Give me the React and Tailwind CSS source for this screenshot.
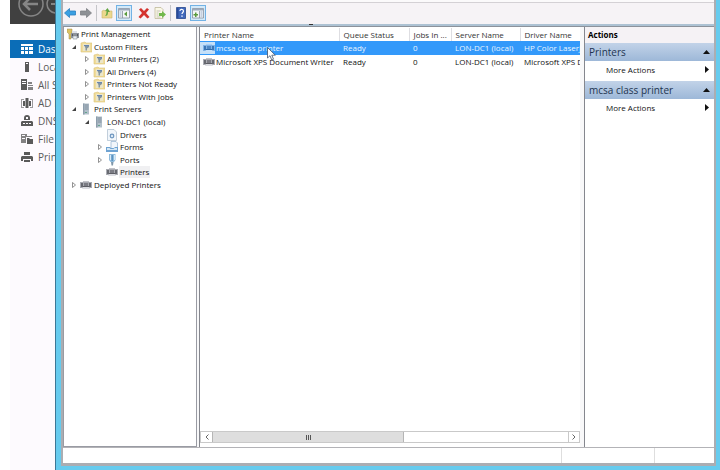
/** Print Management console window, with the server dashboard behind it. */

import { useState } from "react";

const roles = [
  { label: "Dashboard", icon: "grid", active: true },
  { label: "Local Server", icon: "server" },
  { label: "All Servers", icon: "servers" },
  { label: "AD DS", icon: "directory" },
  { label: "DNS", icon: "dns" },
  { label: "File Services", icon: "file" },
  { label: "Print Services", icon: "print" },
];

const tree = [
  { label: "Print Management", level: 0, icon: "console" },
  { label: "Custom Filters", level: 1, icon: "filter", state: "open" },
  { label: "All Printers (2)", level: 2, icon: "filter", state: "closed" },
  { label: "All Drivers (4)", level: 2, icon: "filter", state: "closed" },
  { label: "Printers Not Ready", level: 2, icon: "filter", state: "closed" },
  { label: "Printers With Jobs", level: 2, icon: "filter", state: "closed" },
  { label: "Print Servers", level: 1, icon: "tower", state: "open" },
  { label: "LON-DC1 (local)", level: 2, icon: "tower", state: "open" },
  { label: "Drivers", level: 3, icon: "driver" },
  { label: "Forms", level: 3, icon: "form", state: "closed" },
  { label: "Ports", level: 3, icon: "port", state: "closed" },
  { label: "Printers", level: 3, icon: "printer" },
  { label: "Deployed Printers", level: 1, icon: "printer", state: "closed" },
];

const indents = ["pl-[3px]", "pl-[3px]", "pl-4", "pl-[29px]"];

const printers = [
  { name: "mcsa class printer", status: "Ready", jobs: 0, server: "LON-DC1 (local)", driver: "HP Color LaserJet" },
  { name: "Microsoft XPS Document Writer", status: "Ready", jobs: 0, server: "LON-DC1 (local)", driver: "Microsoft XPS Document" },
];

const columns = [
  { label: "Printer Name", width: "w-[139px]" },
  { label: "Queue Status", width: "w-[70px]" },
  { label: "Jobs In ...", width: "w-[42px]" },
  { label: "Server Name", width: "w-[69px]" },
  { label: "Driver Name", width: "" },
];

function RoleIcon({ name }) {
  return (
    <svg viewBox="0 0 12 12" className="size-3 shrink-0" fill="currentColor" aria-hidden="true">
      {name === "grid" && (
        <path d="M0 1h12v2H0zM0 4h3v3H0zM4 4h3v3H4zM8 4h4v3H8zM0 8h3v3H0zM4 8h3v3H4zM8 8h4v3H8z" />
      )}
      {name === "server" && <path fillRule="evenodd" d="M4 1h4v10H4zM5 2v1h2V2z" />}
      {name === "servers" && (
        <>
          <path fillRule="evenodd" d="M0 0h6v11H0zM1 2v1h4V2zM1 4v1h4V4z" />
          <path d="M7 3h4v2H7zM7 6h5v1H7zM7 8h5v3H7z" opacity=".75" />
        </>
      )}
      {name === "directory" && (
        <>
          <path d="M0 2h3v1H1v7h2v1H0zM12 2H9v1h2v7H9v1h3z" opacity=".6" />
          <path d="M2 4h2v5H2zM8 4h2v5H8zM4.500 1h3v10h-3z" />
        </>
      )}
      {name === "dns" && (
        <>
          <path fillRule="evenodd" d="M6 0a3 3 0 0 1 3 3v2H3V3a3 3 0 0 1 3-3zM5 2v2h2V2z" />
          <path fillRule="evenodd" d="M1 6h10l1 1v4H0V7zM2 8v1h2V8zM5 8v1h2V8zM8 8v1h2V8z" />
        </>
      )}
      {name === "file" && (
        <>
          <path fillRule="evenodd" d="M0 1h6v2h5v1H5v6H0zM1 2v1h3V2zM1 5v1h3V5z" opacity=".75" />
          <path d="M6 5h2l1 1h3v5H6z" />
        </>
      )}
      {name === "print" && (
        <path fillRule="evenodd" d="M3 1h6v3H3zM1 5h10l1 1v4h-2V8H2v2H0V6zM3 9h6v2H3z" />
      )}
    </svg>
  );
}

function PrinterArt({ selected }) {
  const dark = selected ? "#2f6bab" : "#5d5e65";
  const light = selected ? "#7fb2e6" : "#a9abb2";
  return (
    <>
      <path d="M3 2h6v2H3z" fill={selected ? "#a9cff4" : "#c2c3c9"} />
      <path d="M0 3h12v6H0z" fill={light} />
      <path d="M1 4h2v4H1zM9 4h2v4H9z" fill={dark} opacity=".85" />
      <path d="M4 4h4v3H4z" fill={dark} opacity=".6" />
      <path d="M3 7h6v1H3z" fill={dark} />
      <path d="M3 8h6l1 2H2z" fill={selected ? "#c7e1fa" : "#dcdde2"} />
    </>
  );
}

function TreeIcon({ name, selected }) {
  return (
    <svg viewBox="0 0 12 12" className="size-3 shrink-0" aria-hidden="true">
      {name === "printer" && <PrinterArt selected={selected} />}
      {name === "console" && (
        <>
          <path d="M0 1h5v4l-1 1v5H2V6L0 4z" fill="#dcc263" stroke="#9c8748" strokeWidth=".5" />
          <path d="M5 3h5v2H5z" fill="#dfe2ea" />
          <path d="M4 5h8v5H4z" fill="#8f949c" />
          <path d="M5 6h1v2H5zM10 6h1v2h-1z" fill="#565a62" />
          <path d="M6 8h4v3H6z" fill="#e8edf2" stroke="#7a8088" strokeWidth=".5" />
        </>
      )}
      {name === "filter" && (
        <>
          <path d="M1 2l4-1 1 1h6v9H1z" fill="#f0dc9a" stroke="#dcc277" strokeWidth=".6" />
          <path d="M3 3h7v7H3z" fill="#ece6c8" />
          <path d="M4 4h5v2L7 7.500V9.500H5.500V7z" fill="#8294a0" />
          <path d="M4 4h5v1H4z" fill="#6886b0" />
        </>
      )}
      {name === "tower" && (
        <>
          <path d="M3 .5h6v11H3z" fill="#b3c0cb" />
          <path d="M3 .5h1.500v11H3z" fill="#8d9dab" />
          <path d="M5 2h3.500M5 4h3.500M5 6h3.500" stroke="#6f8291" strokeWidth=".8" />
          <path d="M5 9h2v1H5z" fill="#65a38d" />
        </>
      )}
      {name === "driver" && (
        <>
          <path d="M1.500.5h6.500l2.500 2.500v8.500h-9z" fill="#f1f6fb" stroke="#a9bacb" strokeWidth=".7" />
          <circle cx="6" cy="7" r="1.800" fill="#dbe8f5" stroke="#6d96bf" strokeWidth="1.200" />
        </>
      )}
      {name === "form" && (
        <>
          <path d="M5 .5h5l1.500 1.500v6H5z" fill="#f1f6fb" stroke="#8fb0d0" strokeWidth=".7" />
          <path d="M0 6h4l1 1h3l1-1h3v5H0z" fill="#6fa3d2" />
          <path d="M1 7h2.500l1 1h3l1-1H11v2H1z" fill="#d5e8f6" />
        </>
      )}
      {name === "port" && (
        <>
          <path d="M3 0h6.500v6L8 8H4.500L3 6z" fill="#8fbbdc" />
          <path d="M4 1h1v5H4zM8 1h1v5H8z" fill="#d8eaf7" />
          <path d="M5.500 1H7v6H5.500z" fill="#5d94c1" />
          <path d="M5 8h2.500l-.5 3.500H5.500z" fill="#7f97aa" />
        </>
      )}
    </svg>
  );
}

function ToolIcon({ name }) {
  return (
    <svg viewBox="0 0 12 12" className="size-3" aria-hidden="true">
      {name === "back" && (
        <path d="M.5 6L5.500 1.500V4H11.500v4H5.500v2.500z" fill="#3aa0e2" stroke="#2b7fc0" strokeWidth=".8" />
      )}
      {name === "forward" && (
        <path d="M11.500 6L6.500 1.500V4H.5v4h6v2.500z" fill="#8d9095" stroke="#7d8085" strokeWidth=".8" />
      )}
      {name === "up" && (
        <>
          <path d="M1 4l2-1 1 1h7v7H1z" fill="#ecd88d" stroke="#cdb76c" strokeWidth=".6" />
          <path d="M4 9c2 0 3-1 3-4h2L6.500 1 4 4h1.500C5.500 7 5 8 4 9z" fill="#64a744" />
        </>
      )}
      {(name === "tree" || name === "pane") && (
        <>
          <path d="M.5 1.500h11v9.500H.5z" fill="#f4f6f8" stroke="#8791a0" strokeWidth=".8" />
          <path d="M1 2h10v1.500H1z" fill="#9daabd" />
          <path d={name === "tree" ? "M4.500 4v7" : "M7.500 4v7"} stroke="#8791a0" strokeWidth=".8" />
          <path d={name === "tree" ? "M6 7l3-2.500v5z" : "M1.500 7h1.500V5.500h1.500V7H6v1.500H4.500V10H3V8.500H1.500z"} fill="#5a9b3e" />
          <path d={name === "tree" ? "M1.500 5h2M1.500 7h2M1.500 9h2" : "M8.500 5h2M8.500 7h2M8.500 9h2"} stroke="#7b97bd" strokeWidth=".8" />
        </>
      )}
      {name === "delete" && (
        <path d="M1 2.500L3 1l3 3 3-3 2 1.500L8 6l3.500 4-2 1.500L6 8l-3.500 3.500L.5 10 4 6z" fill="#d4332e" />
      )}
      {name === "export" && (
        <>
          <path d="M1 .5h6l2 2v9H1z" fill="#fbf8e7" stroke="#b7b28f" strokeWidth=".7" />
          <path d="M2.500 4h4M2.500 6h2M2.500 8h2M2.500 10h4" stroke="#adaea0" strokeWidth=".7" />
          <path d="M5 6h3V4l4 3.500L8 11V9H5z" fill="#71b84d" />
        </>
      )}
      {name === "help" && (
        <>
          <path d="M1.500.5h9v11h-9z" fill="#4168bd" stroke="#27468e" strokeWidth=".8" />
          <path d="M2 1h1.500v10H2z" fill="#294a98" />
          <path d="M5 4c0-2.500 3.500-2 3.500 0C8.500 5.500 7 5.500 7 7" fill="none" stroke="#fff" strokeWidth="1.200" />
          <path d="M6.300 8.500h1.400v1.300H6.300z" fill="#fff" />
        </>
      )}
    </svg>
  );
}

function ToolButton({ label, icon, pressed }) {
  return (
    <button
      type="button"
      aria-label={label}
      className={
        pressed
          ? "flex size-4 items-center justify-center border border-[#72b2e5] bg-[#d3e9f9]"
          : "flex h-4 w-[14px] items-center justify-center"
      }
    >
      <ToolIcon name={icon} />
    </button>
  );
}

function Twisty({ state }) {
  return (
    <span className="flex w-[13px] shrink-0 justify-center">
      {state && (
        <svg viewBox="0 0 6 6" className="size-[6px]" aria-hidden="true">
          {state === "open" ? (
            <path d="M5 1v4H1z" fill="#444" />
          ) : (
            <path d="M1.500.5L4.500 3l-3 2.500z" fill="#fff" stroke="#777" strokeWidth=".8" />
          )}
        </svg>
      )}
    </span>
  );
}

function ActionGroup({ title }) {
  const [open, setOpen] = useState(true);

  return (
    <section className="mb-[3px]">
      <button
        type="button"
        onClick={() => setOpen((v) => !v)}
        className="flex h-[18px] w-full items-center justify-between bg-linear-to-b from-[#c2d3e8] to-[#9db8d8] pr-1 pl-1 text-[10px] text-[#1e3450]"
      >
        {title}
        <svg viewBox="0 0 7 4" className="h-1 w-[7px]" aria-hidden="true">
          <path d="M0 4L3.500 0 7 4z" fill="#111" />
        </svg>
      </button>
      {open && (
        <button type="button" className="flex h-[17px] w-full items-center justify-between pr-[5px] pl-[21px]">
          More Actions
          <svg viewBox="0 0 4 7" className="h-[7px] w-1" aria-hidden="true">
            <path d="M0 0l4 3.500L0 7z" fill="#111" />
          </svg>
        </button>
      )}
    </section>
  );
}

function Sidebar() {
  return (
    <aside className="ml-[10px] w-[45px] shrink-0 overflow-hidden">
      <div className="h-6 bg-[#404040]">
        <svg viewBox="0 0 45 24" className="h-6 w-[45px]" fill="none" stroke="#858585" aria-hidden="true">
          <circle cx="21" cy="4" r="12" strokeWidth="1.500" />
          <path d="M28 4H15M20-2l-6 6 6 6" strokeWidth="2.500" />
          <circle cx="46" cy="4" r="9" strokeWidth="1.500" />
          <path d="M52 4H41" strokeWidth="2" />
        </svg>
      </div>
      <nav className="h-full bg-[#fdfafe] text-[10px] text-[#5a5a5a]">
        <div className="h-4 bg-white" />
        {roles.map((role) => (
          <a
            key={role.label}
            href="#"
            className={
              role.active
                ? "flex h-[18px] items-center gap-[5px] bg-[#0b6db7] pl-[11px] whitespace-nowrap text-white"
                : "flex h-[18px] items-center gap-[5px] pl-[11px] whitespace-nowrap"
            }
          >
            <RoleIcon name={role.icon} />
            {role.label}
          </a>
        ))}
      </nav>
    </aside>
  );
}

function Toolbar() {
  return (
    <header className="shrink-0 bg-[#f6f3f6]">
      <div className="h-[3px] border-b border-[#d4d1d5] bg-[#fbfafb]" />
      <div className="flex h-[21px] items-center gap-[2px] pb-[2px]">
        <ToolButton label="Back" icon="back" />
        <ToolButton label="Forward" icon="forward" />
        <span className="mx-px h-4 w-px bg-[#c5c5c9]" />
        <ToolButton label="Up one level" icon="up" />
        <ToolButton label="Show console tree" icon="tree" pressed />
        <span className="w-px" />
        <ToolButton label="Delete" icon="delete" />
        <ToolButton label="Export list" icon="export" />
        <span className="mx-px h-4 w-px bg-[#c5c5c9]" />
        <ToolButton label="Help" icon="help" />
        <ToolButton label="Show action pane" icon="pane" pressed />
      </div>
      <div className="flex h-[3px] justify-center border-b border-[#8c929b] bg-[#adc2d3] pr-[155px]">
        <span className="h-px w-1 bg-[#333]" />
      </div>
    </header>
  );
}

function PrinterTable() {
  return (
    <table className="mt-px w-full table-fixed border-collapse text-left whitespace-nowrap">
      <thead>
        <tr className="h-[13px]">
          {columns.map((col) => (
            <th
              key={col.label}
              className={`${col.width} overflow-hidden border-r border-[#dedee2] p-0 pl-1 font-normal text-[#333] last:border-r-0`}
            >
              {col.label}
            </th>
          ))}
        </tr>
      </thead>
      <tbody>
        {printers.map((printer, i) => {
          const selected = i === 0;
          return (
            <tr key={printer.name} className={selected ? "h-[14px] bg-[#3399fa] text-[#e9f5ff]" : "h-[13px]"}>
              <td className="relative p-0">
                <span className="flex items-center">
                  <span className={selected ? "flex w-[15px] justify-end bg-[#c5e0f8]" : "flex w-[15px] justify-end"}>
                    <TreeIcon name="printer" selected={selected} />
                  </span>
                  <span className="pl-px">{printer.name}</span>
                </span>
                {selected && (
                  <svg viewBox="0 0 9 14" className="absolute top-[6px] left-[67px] z-10 h-[14px] w-[9px]" aria-hidden="true">
                    <path d="M.5.5v10.500L3 8.700 4.800 13l1.700-.8L4.800 8.200h3.500z" fill="#fff" stroke="#43536a" strokeWidth=".8" />
                  </svg>
                )}
              </td>
              <td className="p-0 pl-1">{printer.status}</td>
              <td className="p-0 pl-1">{printer.jobs}</td>
              <td className="p-0 pl-1">{printer.server}</td>
              <td className="overflow-hidden p-0 pl-1">{printer.driver}</td>
            </tr>
          );
        })}
      </tbody>
    </table>
  );
}

function ScrollBar() {
  return (
    <div className="mt-auto mb-1 flex h-3 shrink-0 border border-[#c9c9c9]">
      <button type="button" aria-label="Scroll left" className="flex w-[11px] items-center justify-center">
        <svg viewBox="0 0 4 6" className="h-[6px] w-1" fill="none" stroke="#666" aria-hidden="true">
          <path d="M3.500.5L1 3l2.500 2.500" />
        </svg>
      </button>
      <div className="flex-1">
        <div className="flex h-full w-[54%] items-center justify-center gap-px border-x border-[#b5b5b5] bg-[#dedede]">
          <span className="h-[5px] w-px bg-[#555]" />
          <span className="h-[5px] w-px bg-[#555]" />
          <span className="h-[5px] w-px bg-[#555]" />
        </div>
      </div>
      <button
        type="button"
        aria-label="Scroll right"
        className="flex w-[11px] items-center justify-center border-l border-[#c9c9c9]"
      >
        <svg viewBox="0 0 4 6" className="h-[6px] w-1" fill="none" stroke="#666" aria-hidden="true">
          <path d="M.5.5L3 3 .5 5.500" />
        </svg>
      </button>
    </div>
  );
}

export default function App() {
  const [current, setCurrent] = useState("Printers");

  return (
    <div className="flex h-screen overflow-hidden bg-white font-['Open_Sans',sans-serif] text-[8px] leading-3 text-[#111]">
      <Sidebar />
      <div className="flex min-w-0 flex-1 border-l border-[#3d7795] bg-[#66cbee] pr-1 pb-1 pl-[5px]">
        <div className="flex min-w-0 flex-1 flex-col border-x-2 border-b-3 border-[#abadb2] bg-[#f8f8f9]">
          <Toolbar />
          <main className="flex min-h-0 flex-1">
            <ul className="mr-[2px] w-[134px] shrink-0 border-x border-b border-[#999ba3] bg-white pt-px">
              <li className="grid h-[163px] auto-rows-fr">
                {tree.map((node) => (
                  <button
                    key={node.label}
                    type="button"
                    onClick={() => setCurrent(node.label)}
                    className={`flex items-center text-left whitespace-nowrap ${indents[node.level]}`}
                  >
                    {node.level > 0 && <Twisty state={node.state} />}
                    <TreeIcon name={node.icon} />
                    <span className={node.label === current ? "ml-px bg-[#f0f0f2] px-px" : "ml-px px-px"}>
                      {node.label}
                    </span>
                  </button>
                ))}
              </li>
            </ul>
            <section className="mr-1 flex min-w-0 flex-1 flex-col overflow-hidden border-l border-[#85878e] bg-white">
              <PrinterTable />
              <ScrollBar />
            </section>
            <aside className="w-[130px] shrink-0 border-l border-[#85878e] bg-white">
              <h2 className="flex h-4 items-center bg-[#f5f2f5] pl-[3px] font-bold text-black">Actions</h2>
              <ActionGroup title="Printers" />
              <ActionGroup title="mcsa class printer" />
            </aside>
          </main>
          <footer className="flex h-4 shrink-0 border-t border-[#b3b3b7] bg-white">
            <span className="flex-1" />
            <span className="w-[93px] border-l border-[#dedede]" />
            <span className="w-[60px] border-l border-[#dedede]" />
          </footer>
        </div>
      </div>
    </div>
  );
}
